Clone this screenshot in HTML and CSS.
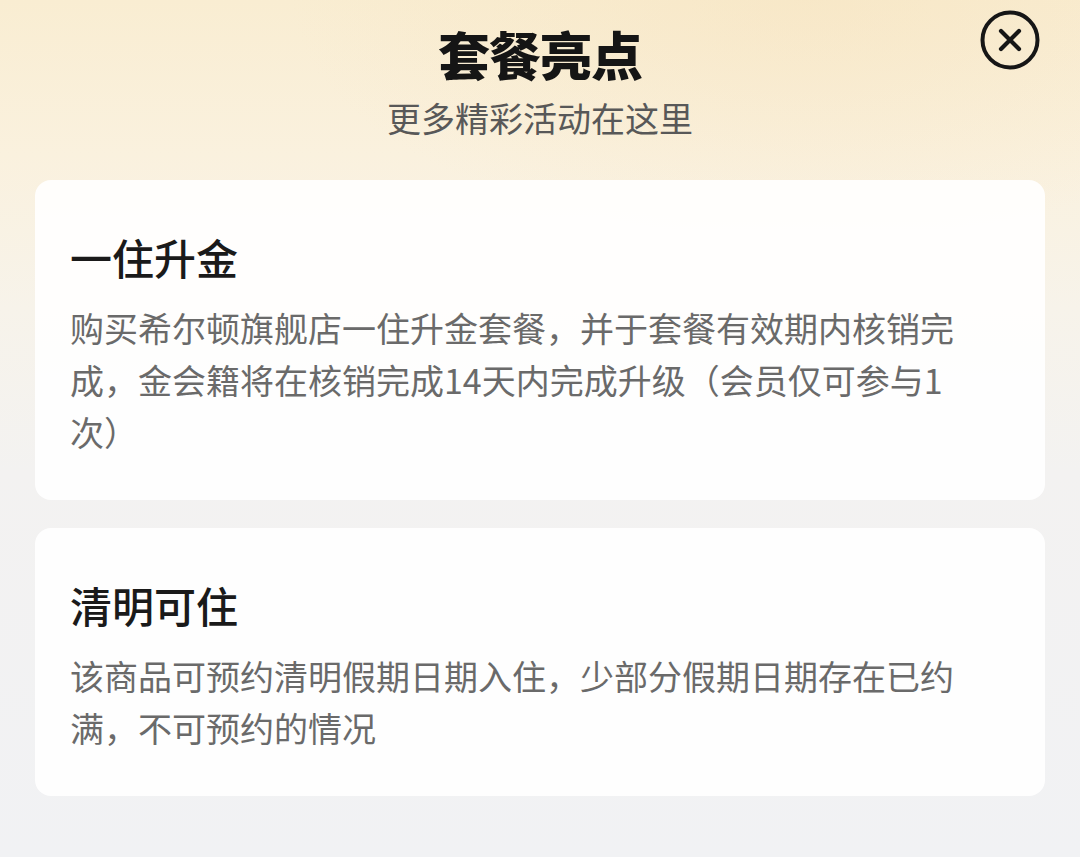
FILE: index.html
```html
<!DOCTYPE html>
<html lang="zh-CN">
<head>
  <meta charset="UTF-8">
  <title>套餐亮点</title>
  <link rel="stylesheet" href="styles.css">
</head>
<body>
  <div class="sheet">
    <button class="close" aria-label="关闭">
      <svg viewBox="0 0 60 60" width="60" height="60">
        <circle cx="30" cy="30" r="27.5" fill="none" stroke="#161616" stroke-width="4"/>
        <path d="M21 21 L39 39 M39 21 L21 39" stroke="#161616" stroke-width="4.2" stroke-linecap="round"/>
      </svg>
    </button>

    <div class="header">
      <h1 class="title">套餐亮点</h1>
      <p class="subtitle">更多精彩活动在这里</p>
    </div>

    <div class="list">
      <div class="card">
        <h3 class="card-title">一住升金</h3>
        <p class="card-text">购买希尔顿旗舰店一住升金套餐，并于套餐有效期内核销完成，金会籍将在核销完成14天内完成升级（会员仅可参与1次）</p>
      </div>
      <div class="card">
        <h3 class="card-title">清明可住</h3>
        <p class="card-text">该商品可预约清明假期日期入住，少部分假期日期存在已约满，不可预约的情况</p>
      </div>
    </div>
  </div>
</body>
</html>
```

FILE: styles.css
```css
html, body {
  margin: 0;
  height: 100%;
}
body {
  font-family: "Noto Sans CJK SC", "Noto Sans", sans-serif;
  background: #f1f2f4;
}
.sheet {
  position: relative;
  min-height: 100%;
  box-sizing: border-box;
  padding: 22px 35px 40px;
  background:
    radial-gradient(ellipse 520px 240px at 75% 0%, rgba(245, 222, 180, 0.35), rgba(245, 222, 180, 0) 100%),
    linear-gradient(180deg, #f9edd2 0%, #faf1de 18%, #f7f3ea 36%, #f3f2f1 55%, #f1f2f4 100%);
}
.close {
  position: absolute;
  top: 10px;
  right: 40px;
  width: 60px;
  height: 60px;
  padding: 0;
  border: none;
  background: none;
  cursor: pointer;
}
.close svg {
  display: block;
}
.header {
  text-align: center;
}
.title {
  margin: 0;
  font-size: 52px;
  line-height: 64px;
  font-weight: 900;
  color: #151515;
  letter-spacing: -1px;
}
.subtitle {
  margin: 10px 0 0;
  font-size: 34px;
  line-height: 44px;
  color: #585858;
}
.list {
  margin-top: 40px;
  display: flex;
  flex-direction: column;
  gap: 28px;
}
.card {
  background: rgba(255, 255, 255, 0.9);
  border-radius: 16px;
  padding: 49px 80px 42px 35px;
}
.card-title {
  margin: 0;
  font-size: 42px;
  line-height: 56px;
  font-weight: 500;
  color: #1a1a1a;
}
.card-text {
  margin: 17px 0 0;
  font-size: 34px;
  line-height: 52px;
  color: #6a6a6a;
}
```
